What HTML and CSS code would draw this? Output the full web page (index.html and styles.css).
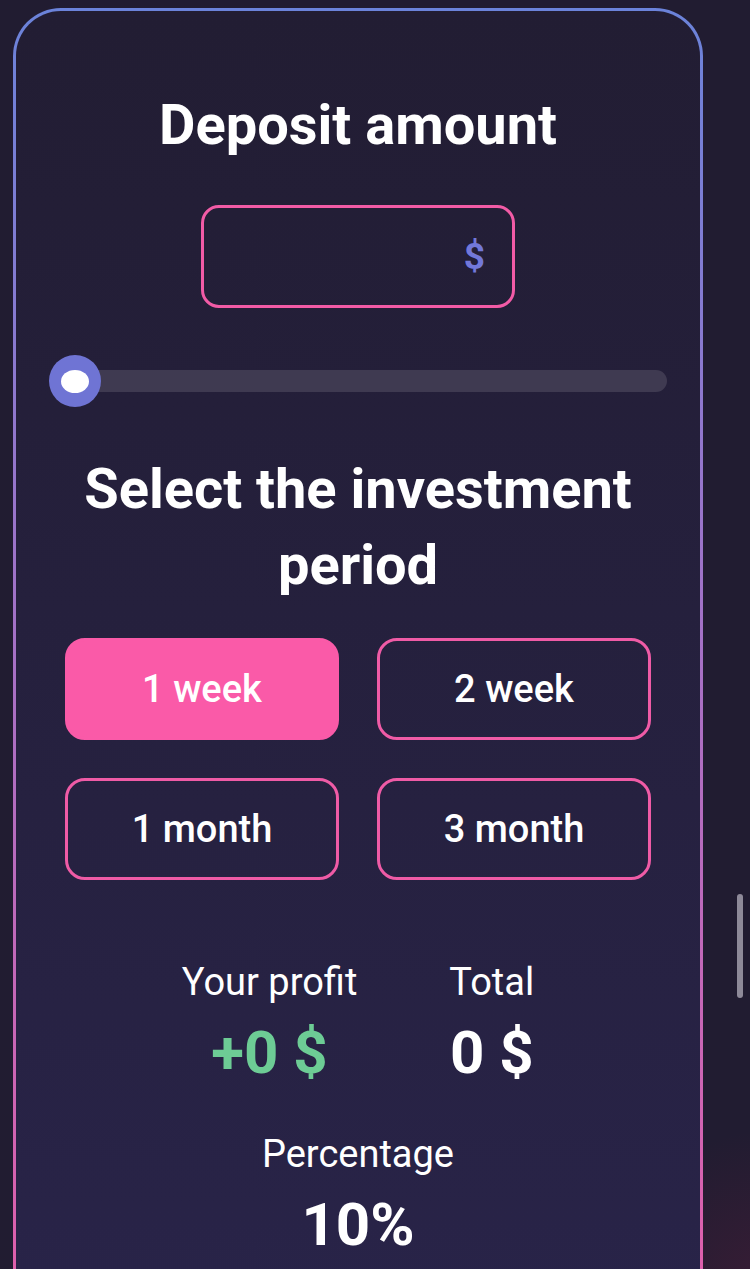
FILE: index.html
```html
<!DOCTYPE html>
<html>
<head>
<meta charset="utf-8">
<link rel="stylesheet" href="styles.css">
</head>
<body>
<div class="page">
  <div class="card">
    <h1 class="title">Deposit amount</h1>
    <div class="amount-box"><span class="currency">$</span></div>
    <div class="slider">
      <div class="track"></div>
      <div class="thumb"><div class="thumb-dot"></div></div>
    </div>
    <h2 class="title period-title">Select the investment period</h2>
    <div class="periods">
      <div class="period active">1 week</div>
      <div class="period">2 week</div>
      <div class="period">1 month</div>
      <div class="period">3 month</div>
    </div>
    <div class="results">
      <div class="result">
        <div class="label">Your profit</div>
        <div class="value profit">+0 $</div>
      </div>
      <div class="result">
        <div class="label">Total</div>
        <div class="value">0 $</div>
      </div>
    </div>
    <div class="percentage">
      <div class="label">Percentage</div>
      <div class="value big">10%</div>
    </div>
  </div>
  <div class="scrollbar"></div>
</div>
</body>
</html>
```

FILE: styles.css
```css
* { box-sizing: border-box; }
html, body {
  margin: 0;
  padding: 0;
  height: 100%;
  overflow: hidden;
}
body {
  background: #211c31;
  font-family: Roboto, "Noto Sans", sans-serif;
  color: #ffffff;
}
.page {
  position: relative;
  height: 1269px;
  padding: 8px 47px 0 13px;
  background: radial-gradient(circle at 770px 1290px, rgba(100, 30, 60, 0.35), rgba(33, 28, 49, 0) 160px), #211c31;
}
.card {
  height: 1400px;
  border: 3px solid transparent;
  border-radius: 48px;
  background:
    linear-gradient(180deg, #221d33 0%, #29244a 100%) padding-box,
    linear-gradient(180deg, #6b83da 0%, #a471c6 45%, #ea5ca6 100%) border-box;
  display: flex;
  flex-direction: column;
  align-items: center;
  padding: 76px 33px 0 33px;
}
.title {
  margin: 0;
  font-size: 56px;
  font-weight: 700;
  line-height: 76px;
  text-align: center;
  letter-spacing: 0;
}
.amount-box {
  margin-top: 42px;
  width: 314px;
  height: 103px;
  border: 3px solid #f25ba6;
  border-radius: 18px;
  display: flex;
  align-items: center;
  justify-content: flex-end;
  padding-right: 27px;
}
.currency {
  color: #7278d9;
  font-size: 37px;
  font-weight: 700;
}
.slider {
  position: relative;
  margin-top: 47px;
  align-self: stretch;
  height: 52px;
  display: flex;
  align-items: center;
}
.track {
  margin-left: 20px;
  flex: 1;
  height: 22px;
  border-radius: 11px;
  background: #3f3a51;
}
.thumb {
  position: absolute;
  left: 0;
  top: 0;
  width: 52px;
  height: 52px;
  border-radius: 50%;
  background: #6f74d4;
  display: flex;
  align-items: center;
  justify-content: center;
}
.thumb-dot {
  width: 28px;
  height: 23px;
  border-radius: 50%;
  background: #ffffff;
}
.period-title {
  margin-top: 44px;
}
.periods {
  margin-top: 35px;
  display: grid;
  grid-template-columns: 274px 274px;
  column-gap: 38px;
  row-gap: 38px;
}
.period {
  height: 102px;
  border: 3px solid #ef5ba6;
  border-radius: 20px;
  display: flex;
  align-items: center;
  justify-content: center;
  font-size: 38px;
  font-weight: 500;
}
.period.active {
  background: #fa5aa8;
  border-color: #fa5aa8;
}
.results {
  margin-top: 80px;
  display: flex;
  gap: 92px;
}
.result {
  display: flex;
  flex-direction: column;
  align-items: center;
}
.label {
  font-size: 38px;
  font-weight: 400;
  line-height: 44px;
}
.value {
  margin-top: 17px;
  font-size: 60px;
  font-weight: 700;
  line-height: 64px;
}
.value.profit {
  color: #6dcc95;
}
.percentage {
  margin-top: 47px;
  display: flex;
  flex-direction: column;
  align-items: center;
}
.value.big {
  margin-top: 17px;
  font-size: 60px;
}
.scrollbar {
  position: absolute;
  left: 737px;
  top: 894px;
  width: 6px;
  height: 104px;
  border-radius: 3px;
  background: #8e8a99;
}
```
